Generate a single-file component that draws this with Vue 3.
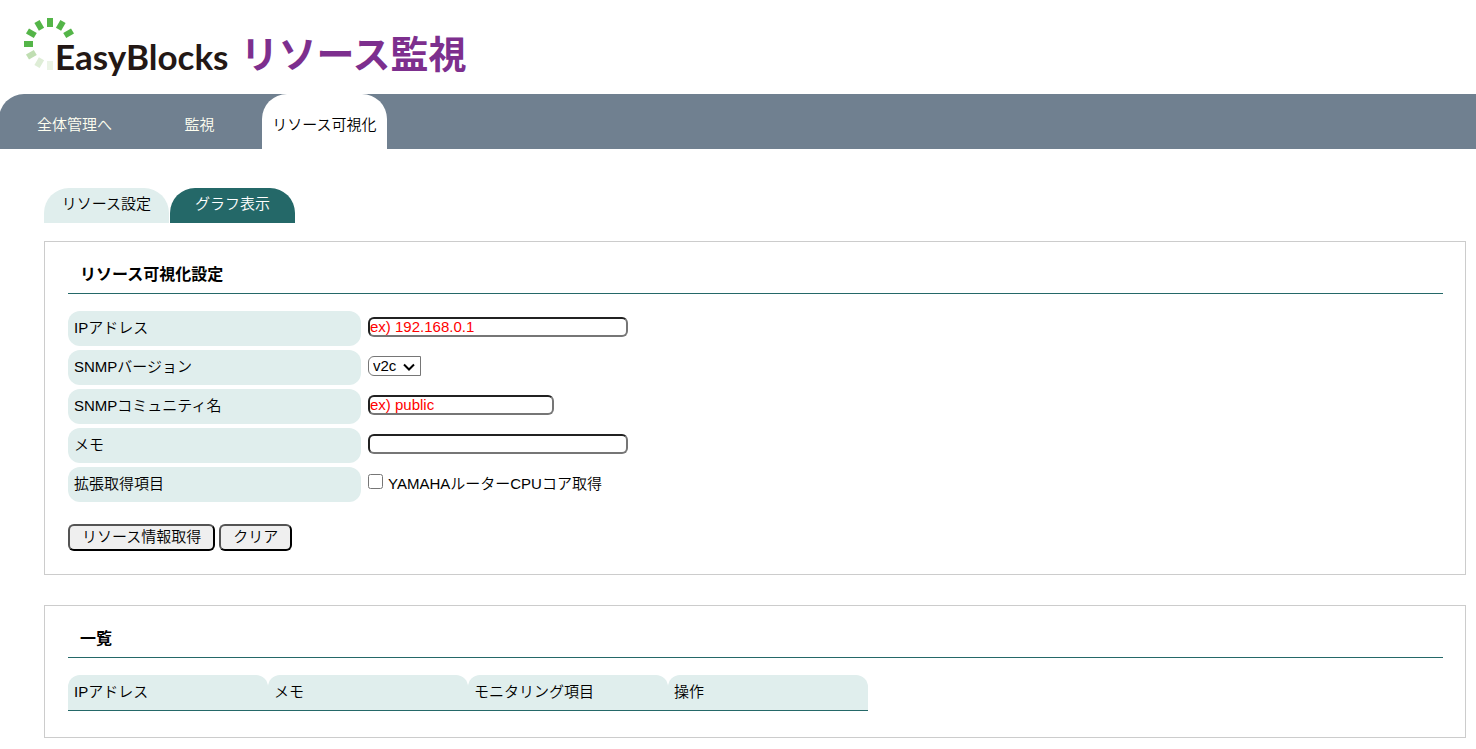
<script setup>
import { ref } from 'vue'

const mainTabs = [
  { label: '全体管理へ' },
  { label: '監視' },
  { label: 'リソース可視化', active: true },
]
const subTabs = [
  { label: 'リソース設定' },
  { label: 'グラフ表示', active: true },
]
const columns = ['IPアドレス', 'メモ', 'モニタリング項目', '操作']

const ip = ref('')
const version = ref('v2c')
const community = ref('')
const memo = ref('')
const cores = ref(false)

function clearForm() {
  ip.value = ''
  version.value = 'v2c'
  community.value = ''
  memo.value = ''
  cores.value = false
}
</script>

<template>
  <div class="page">
    <header class="header">
      <h1 class="brand">
        <svg class="mark" viewBox="0 0 52 53" aria-hidden="true">
          <g fill="#54b548">
            <rect x="23" y="0" width="6" height="9" />
            <rect x="23" y="0" width="6" height="9" transform="rotate(30 26 26)" />
            <rect x="23" y="0" width="6" height="9" transform="rotate(60 26 26)" />
            <rect x="23" y="0" width="6" height="9" transform="rotate(-30 26 26)" />
            <rect x="23" y="0" width="6" height="9" transform="rotate(-60 26 26)" />
            <rect x="23" y="0" width="6" height="9" transform="rotate(-90 26 26)" />
          </g>
          <rect x="23" y="0" width="6" height="9" fill="#c0deb2" transform="rotate(-120 26 26)" />
          <rect x="23" y="0" width="6" height="9" fill="#deedd6" transform="rotate(-150 26 26)" />
          <rect x="23" y="0" width="6" height="9" fill="#ebf4e6" transform="rotate(180 26 26)" />
        </svg>
        <span class="name">EasyBlocks</span>
        <span class="product">リソース監視</span>
      </h1>
    </header>

    <nav class="main-nav">
      <a v-for="tab in mainTabs" :key="tab.label" href="#" :class="{ active: tab.active }">{{ tab.label }}</a>
    </nav>

    <main class="content">
      <nav class="sub-nav">
        <a v-for="tab in subTabs" :key="tab.label" href="#" :class="{ active: tab.active }">{{ tab.label }}</a>
      </nav>

      <section class="panel">
        <h2>リソース可視化設定</h2>
        <form @submit.prevent>
          <div class="row">
            <label class="caption" for="ip">IPアドレス</label>
            <div class="field"><input id="ip" v-model="ip" class="text wide" type="text" placeholder="ex) 192.168.0.1" /></div>
          </div>
          <div class="row">
            <label class="caption" for="version">SNMPバージョン</label>
            <div class="field">
              <span class="select">
                <select id="version" v-model="version">
                  <option>v1</option>
                  <option>v2c</option>
                </select>
                <svg viewBox="0 0 12 8" aria-hidden="true"><path d="M1 1.5 L6 6.5 L11 1.5" /></svg>
              </span>
            </div>
          </div>
          <div class="row">
            <label class="caption" for="community">SNMPコミュニティ名</label>
            <div class="field"><input id="community" v-model="community" class="text" type="text" placeholder="ex) public" /></div>
          </div>
          <div class="row">
            <label class="caption" for="memo">メモ</label>
            <div class="field"><input id="memo" v-model="memo" class="text wide" type="text" /></div>
          </div>
          <div class="row">
            <span class="caption">拡張取得項目</span>
            <div class="field check">
              <input id="cores" v-model="cores" type="checkbox" />
              <label for="cores">YAMAHAルーターCPUコア取得</label>
            </div>
          </div>
          <div class="actions">
            <button type="submit">リソース情報取得</button>
            <button type="button" @click="clearForm">クリア</button>
          </div>
        </form>
      </section>

      <section class="panel">
        <h2>一覧</h2>
        <table>
          <thead>
            <tr>
              <th v-for="column in columns" :key="column" scope="col">{{ column }}</th>
            </tr>
          </thead>
        </table>
      </section>
    </main>
  </div>
</template>

<style>
body {
  margin: 0;
  background: #fff;
}
</style>

<style scoped>
.page {
  font-family: "Liberation Sans", "Noto Sans CJK JP", sans-serif;
  font-size: 15px;
  font-weight: 350;
  line-height: 20px;
  color: #000;
  overflow-x: hidden;
}
.page * {
  box-sizing: border-box;
}
.header {
  height: 94px;
  padding: 18px 24px 0;
}
.brand {
  display: flex;
  margin: 0;
  line-height: 40px;
}
.mark {
  width: 52px;
  height: 53px;
  flex: none;
}
.name {
  margin: 18px 0 0 -21px;
  font-family: Lato, sans-serif;
  font-size: 35px;
  font-weight: 700;
  color: #231815;
}
.product {
  margin: 14px 0 0 12px;
  font-family: "Noto Sans CJK JP", sans-serif;
  font-size: 38px;
  font-weight: 700;
  color: #7d2f8e;
}
.main-nav {
  display: flex;
  height: 55px;
  margin-left: -1px;
  padding-left: 13px;
  background: #708090;
  border-top-left-radius: 25px;
}
.main-nav a {
  width: 125px;
  padding-top: 21px;
  text-align: center;
  text-decoration: none;
  color: ivory;
}
.main-nav a.active {
  background: #fff;
  color: #000;
  border-radius: 25px 25px 0 0;
}
.content {
  padding: 39px 10px 11px 44px;
}
.sub-nav {
  display: flex;
  gap: 1px;
  margin-bottom: 18px;
}
.sub-nav a {
  width: 125px;
  height: 35px;
  padding-top: 6px;
  text-align: center;
  text-decoration: none;
  color: #000;
  background: #e0eeed;
  border-radius: 25px 25px 0 0;
}
.sub-nav a.active {
  background: #246868;
  color: #fff;
}
.panel {
  padding: 23px 22px 23px 23px;
  border: 1px solid #ccc;
}
.panel + .panel {
  margin-top: 30px;
  padding-bottom: 26px;
}
h2 {
  margin: 0 0 17px;
  padding: 0 0 8px 12px;
  font-size: 16px;
  line-height: 20px;
  font-weight: 700;
  border-bottom: 1px solid #246868;
}
.row {
  display: flex;
  gap: 7px;
  margin-bottom: 4px;
}
.caption {
  width: 293px;
  height: 35px;
  padding: 7px 6px;
  background: #e0eeed;
  border-radius: 12px;
}
.field {
  display: flex;
  align-items: flex-start;
  padding-top: 6px;
}
.text {
  width: 186px;
  height: 20px;
  padding: 0 0 2px;
  font: inherit;
  line-height: 14px;
  background: #fff;
  border: 2px inset #767676;
  border-radius: 6px;
}
.text.wide {
  width: 260px;
}
.text::placeholder {
  color: #f00;
  opacity: 1;
}
.select {
  position: relative;
}
.select svg {
  position: absolute;
  top: 7px;
  right: 6px;
  width: 12px;
  height: 8px;
  fill: none;
  stroke: #000;
  stroke-width: 2;
  pointer-events: none;
}
select {
  display: block;
  width: 53px;
  height: 20px;
  padding: 0 0 0 4px;
  font: inherit;
  line-height: 18px;
  color: #000;
  appearance: none;
  background: #fff;
  border: 1px solid #767676;
  border-radius: 6px 0 0 6px;
}
.check {
  gap: 5px;
  padding-top: 7px;
}
.check input {
  width: 15px;
  height: 15px;
  margin: 0;
}
.actions {
  display: flex;
  gap: 4px;
  padding-top: 18px;
}
button {
  height: 27px;
  padding: 0 12px 2px;
  font: inherit;
  line-height: 20px;
  color: #000;
  background: #efefef;
  border: 2px outset #000;
  border-radius: 6px;
}
table {
  width: 800px;
  table-layout: fixed;
  border-collapse: separate;
  border-spacing: 0;
}
th {
  height: 36px;
  padding: 0 6px 2px;
  font-weight: 350;
  text-align: left;
  background: #e0eeed;
  border-bottom: 1px solid #246868;
  border-radius: 12px 12px 0 0;
}
</style>
